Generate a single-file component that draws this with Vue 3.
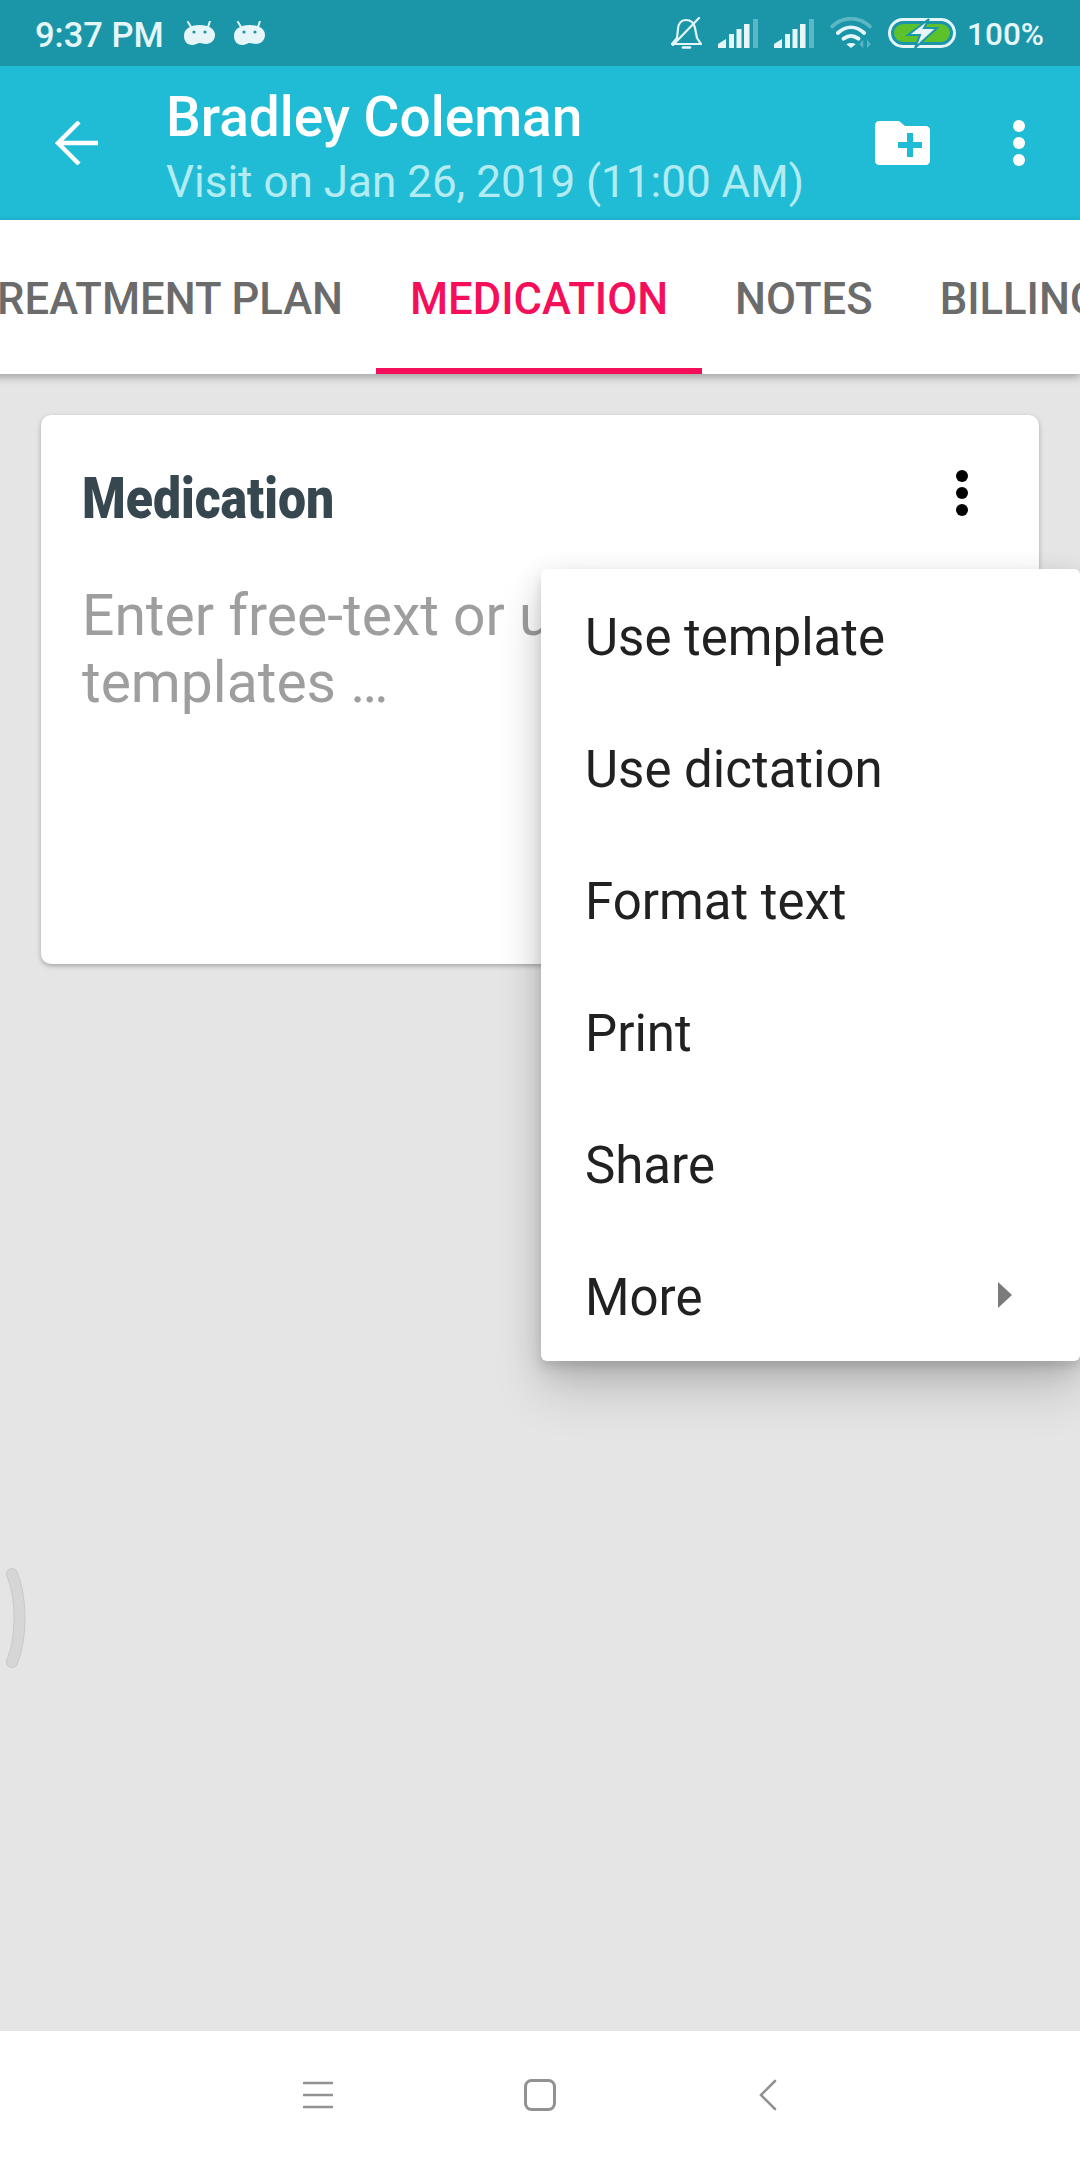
<script setup>
const items = ['Use template', 'Use dictation', 'Format text', 'Print', 'Share', 'More']
const tabs = [
  { label: 'TREATMENT PLAN' },
  { label: 'MEDICATION', active: true },
  { label: 'NOTES' },
  { label: 'BILLING' }
]
</script>

<template>
  <div class="page">
    <div class="status">
      <span class="clock">9:37 PM</span>
      <svg v-for="n in 2" :key="n" class="bug" viewBox="0 0 31 24">
        <path d="M4 1l3 5M26 0l-2 6" stroke="#e6f6f8" stroke-width="2" stroke-linecap="round" />
        <path d="M0 15C0 8 6 4 15.500 4S31 8 31 14c0 5-4 9-9 9-3 0-4-1-6-1-3 0-4 2-8 2-5 0-8-4-8-9z" fill="#e6f6f8" />
        <circle cx="10" cy="11" r="1.600" fill="#1a96a8" />
        <circle cx="21" cy="11" r="1.600" fill="#1a96a8" />
      </svg>
      <div class="grow"></div>
      <svg class="bell" viewBox="0 0 31 32" fill="none" stroke="#e6f6f8" stroke-width="2.200" stroke-linecap="round" stroke-linejoin="round">
        <path d="M1 27h29l-4-6-2-10c-1-5-4-8-9-8s-8 4-8 9l-1 9z" />
        <path d="M2 28L28 1" />
        <path d="M12 30.500h7" stroke-width="2.600" />
      </svg>
      <svg v-for="n in 2" :key="'s' + n" class="signal" viewBox="0 0 40 29">
        <path d="M0 29v-4l8-5v9z" fill="#e6f6f8" />
        <rect x="11" y="15" width="5" height="14" fill="#e6f6f8" />
        <rect x="18.500" y="10" width="5" height="19" fill="#e6f6f8" />
        <rect x="26" y="5" width="5.500" height="24" fill="#e6f6f8" />
        <rect x="35" y="0" width="5" height="29" fill="#5db6c3" />
      </svg>
      <svg class="wifi" viewBox="0 0 44 34" fill="none" stroke-linecap="round">
        <path d="M2 10C14-1 30-1 42 10" stroke="#5db6c3" stroke-width="4" />
        <path d="M8 17c9-8 19-8 28 0" stroke="#e6f6f8" stroke-width="4" />
        <path d="M14 23c6-4 10-4 16 0" stroke="#e6f6f8" stroke-width="4" />
        <path d="M22 33l-5-4c3-2 7-2 10 0z" fill="#e6f6f8" />
        <path d="M35 24v9l-4-4zM39 33v-9l4 5z" fill="#5db6c3" stroke="none" />
      </svg>
      <svg class="battery" viewBox="0 0 68 30">
        <rect x="1.500" y="1.500" width="65" height="27" rx="13.500" fill="none" stroke="#e6f6f8" stroke-width="3" />
        <rect x="6" y="6" width="56" height="18" rx="9" fill="#5cc12b" />
        <path d="M41 1L20 17h12l-5 13 22-20H36z" fill="#e6f6f8" stroke="#1a96a8" stroke-width="2" />
      </svg>
      <span class="pct">100%</span>
    </div>

    <header class="appbar">
      <svg class="back" viewBox="0 0 44 44" fill="none" stroke="#fff" stroke-width="4.400">
        <path d="M46 22H3M25 1L4 22l21 21" />
      </svg>
      <div class="titles">
        <div class="title">Bradley Coleman</div>
        <div class="subtitle">Visit on Jan 26, 2019 (11:00 AM)</div>
      </div>
      <svg class="folder" viewBox="0 0 55 44">
        <path d="M4 0h20l6 5h21c2 0 4 2 4 4v31c0 2-2 4-4 4H4c-2 0-4-2-4-4V4c0-2 2-4 4-4z" fill="#fff" />
        <path d="M33 14h6v9h9v6h-9v9h-6v-9h-9v-6h9z" transform="translate(-1 -2)" fill="#20bcd5" />
      </svg>
      <div class="dots light"><i></i><i></i><i></i></div>
    </header>

    <nav class="tabs">
      <div v-for="t in tabs" :key="t.label" class="tab" :class="{ active: t.active }">{{ t.label }}</div>
    </nav>

    <main class="content">
      <section class="card">
        <div class="card-head">
          <h2 class="card-title">Medication</h2>
          <div class="dots dark"><i></i><i></i><i></i></div>
        </div>
        <p class="placeholder">Enter free-text or use<br />templates …</p>
      </section>

      <ul class="menu">
        <li v-for="item in items" :key="item" class="menu-item">
          <span class="menu-label">{{ item }}</span>
          <svg v-if="item === 'More'" class="caret" viewBox="0 0 14 26"><path d="M0 0l14 13L0 26z" fill="#7b7b7b" /></svg>
        </li>
      </ul>

      <svg class="handle" viewBox="0 0 24 100" fill="none" stroke-linecap="round">
        <path d="M8 6c10 24 10 64 0 88" stroke="#c9c9c9" stroke-width="12" />
        <path d="M8 6c10 24 10 64 0 88" stroke="#d6d6d6" stroke-width="10" />
      </svg>
    </main>

    <footer class="navbar">
      <svg class="nav-menu" viewBox="0 0 30 30">
        <path d="M1 3h28M1 15h28M1 27h28" stroke="#929292" stroke-width="2.600" stroke-linecap="round" />
      </svg>
      <svg class="nav-home" viewBox="0 0 32 32">
        <rect x="1.500" y="1.500" width="29" height="29" rx="6" fill="none" stroke="#929292" stroke-width="3" />
      </svg>
      <svg class="nav-back" viewBox="0 0 18 32">
        <path d="M16 2L2 16l14 14" fill="none" stroke="#929292" stroke-width="2.600" stroke-linecap="round" />
      </svg>
    </footer>
  </div>
</template>

<style scoped>
.page {
  width: 1080px;
  height: 2160px;
  display: flex;
  flex-direction: column;
  overflow: hidden;
  background: #e5e5e5;
  font-family: Roboto, "Liberation Sans", sans-serif;
}
.status {
  height: 66px;
  flex: none;
  background: #1a96a8;
  display: flex;
  align-items: center;
  padding: 0 36px 0 35px;
  color: #e6f6f8;
  font-weight: 500;
}
.clock { font-size: 34.500px; padding-top: 4px; margin-right: 20px; }
.pct { font-size: 31.500px; padding-top: 2px; }
.bug { width: 31px; height: 24px; margin-right: 19px; }
.grow { flex: 1; }
.bell { width: 31px; height: 32px; margin-right: 16px; }
.signal { width: 40px; height: 29px; margin-right: 16px; }
.wifi { width: 42px; height: 32px; margin-right: 16px; }
.battery { width: 68px; height: 30px; margin-right: 11px; }
.appbar {
  height: 154px;
  flex: none;
  box-sizing: border-box;
  background: #20bcd5;
  display: flex;
  align-items: center;
  padding: 0 55px 0 54px;
  color: #fff;
}
.back { width: 44px; height: 44px; margin-right: 68px; flex: none; }
.titles { flex: 1; padding-top: 12px; }
.title { font-size: 55px; font-weight: 500; line-height: 66px; }
.subtitle { font-size: 44px; line-height: 65px; color: #b2ebf2; }
.folder { width: 55px; height: 44px; margin-right: 83px; }
.dots { display: flex; flex-direction: column; gap: 5px; }
.dots i { display: block; width: 12px; height: 12px; border-radius: 50%; }
.dots.light i { background: #fff; }
.dots.dark i { background: #000; }
.tabs {
  height: 154px;
  flex: none;
  background: #fff;
  display: flex;
  margin-left: -63px;
  box-shadow: 0 3px 8px rgba(0, 0, 0, 0.3);
  position: relative;
  z-index: 1;
}
.tab {
  padding: 10px 33.500px 0;
  display: flex;
  align-items: center;
  white-space: nowrap;
  font-size: 43.600px;
  font-weight: 500;
  color: #6b6b6b;
  box-sizing: border-box;
  border-bottom: 6px solid transparent;
}
.tab.active { color: #f50f5a; border-bottom-color: #f50f5a; }
.content { flex: 1; position: relative; padding: 41px 41px 0; }
.card {
  height: 549px;
  background: #fff;
  border-radius: 10px;
  box-shadow: 0 2px 5px rgba(0, 0, 0, 0.28);
  padding: 0 42px 0 41px;
  box-sizing: border-box;
}
.card-head {
  height: 165px;
  display: flex;
  align-items: center;
  justify-content: space-between;
  padding-right: 29px;
}
.card-head .dots { margin-top: -10px; }
.card-title {
  margin: 0;
  font-size: 58px;
  font-weight: 900;
  color: #37474f;
  transform: scaleX(0.86);
  transform-origin: left center;
}
.placeholder {
  margin: 2px 0 0;
  font-size: 57px;
  line-height: 67px;
  color: #9e9e9e;
}
.menu {
  position: absolute;
  top: 195px;
  right: 0;
  width: 539px;
  margin: 0;
  padding: 0;
  list-style: none;
  background: #fff;
  border-radius: 6px;
  box-shadow: 0 30px 50px rgba(0, 0, 0, 0.16), 0 8px 30px rgba(0, 0, 0, 0.12), 0 6px 10px rgba(0, 0, 0, 0.1);
}
.menu-item {
  height: 132px;
  padding: 0 68px 0 44px;
  display: flex;
  align-items: center;
  justify-content: space-between;
  font-size: 51px;
  color: #212121;
}
.menu-label { padding-top: 5px; }
.caret { width: 14px; height: 26px; }
.handle { position: absolute; left: 4px; top: 1194px; width: 24px; height: 100px; }
.navbar {
  height: 129px;
  flex: none;
  background: #fff;
  display: flex;
  align-items: center;
  padding-left: 303px;
  padding-bottom: 1px;
  box-sizing: border-box;
}
.nav-menu { width: 30px; height: 30px; margin-right: 191px; }
.nav-home { width: 32px; height: 32px; margin-right: 203px; }
.nav-back { width: 18px; height: 32px; }
</style>
